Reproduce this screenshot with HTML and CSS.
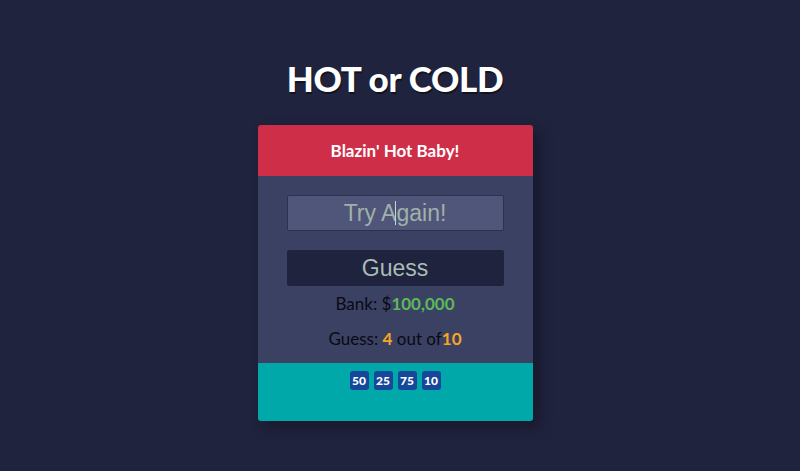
FILE: index.html
```html
<!DOCTYPE html>
<html>
<head>
<meta charset="utf-8">
<link rel="stylesheet" href="styles.css">
</head>
<body>
<h1 class="title">HOT or COLD</h1>
<div class="card">
  <div class="card-header">Blazin' Hot Baby!</div>
  <div class="card-body">
    <div class="input"><span>Try A</span><span class="caret"></span><span>gain!</span></div>
    <button class="guess-btn">Guess</button>
    <p class="stat">Bank: $<b class="green">100,000</b></p>
    <p class="stat">Guess: <b class="orange">4</b> out of<b class="orange">10</b></p>
  </div>
  <div class="card-footer">
    <span class="chip">50</span>
    <span class="chip">25</span>
    <span class="chip">75</span>
    <span class="chip">10</span>
  </div>
</div>
</body>
</html>
```

FILE: styles.css
```css
html, body {
  margin: 0;
  padding: 0;
  background: #20233d;
  height: 100%;
}
body {
  font-family: Lato, "Liberation Sans", sans-serif;
  display: flex;
  flex-direction: column;
  align-items: center;
  padding-right: 10px;
  box-sizing: border-box;
}
.title {
  margin: 56px 0 0;
  height: 69px;
  line-height: 44px;
  font-size: 35px;
  font-weight: 900;
  color: #fff;
  text-shadow: 1px 2px 0 #11131f;
  letter-spacing: -0.3px;
}
.card {
  width: 275px;
  border-radius: 3px;
  overflow: hidden;
  box-shadow: 6px 6px 14px rgba(10, 12, 25, 0.45);
}
.card-header {
  background: #cf2e48;
  height: 51px;
  display: flex;
  align-items: center;
  justify-content: center;
  color: #fff;
  font-size: 17px;
  font-weight: 700;
}
.card-body {
  background: #3b4163;
  padding: 19px 29px 0 29px;
  height: 168px;
  display: flex;
  flex-direction: column;
  align-items: center;
}
.input {
  box-sizing: border-box;
  width: 217px;
  height: 36px;
  background: #4f5679;
  border: 1px solid #2c3150;
  border-radius: 2px;
  display: flex;
  align-items: center;
  justify-content: center;
  font-family: "Liberation Sans", Arial, sans-serif;
  font-size: 23px;
  color: #a0b0aa;
}
.caret {
  display: inline-block;
  width: 1px;
  height: 24px;
  background: #c8d0d8;
  margin: 0 0 0 -1px;
}
.guess-btn {
  box-sizing: border-box;
  margin-top: 19px;
  width: 217px;
  height: 36px;
  border: 0;
  border-radius: 2px;
  background: #20233d;
  color: #a9bcb5;
  font-family: "Liberation Sans", Arial, sans-serif;
  font-size: 23px;
  padding: 0;
}
.stat {
  margin: 0;
  height: 35px;
  line-height: 35px;
  font-size: 17px;
  color: #080a14;
}
.green { color: #5cb85c; }
.orange { color: #f5a623; }
.card-footer {
  background: #00a8a9;
  height: 58px;
  display: flex;
  justify-content: center;
  align-items: flex-start;
  gap: 5px;
  padding-top: 8px;
  box-sizing: border-box;
}
.chip {
  width: 19px;
  height: 19px;
  border-radius: 3px;
  background: #16479a;
  color: #fff;
  font-size: 12px;
  font-weight: 900;
  display: flex;
  align-items: center;
  justify-content: center;
}
```
